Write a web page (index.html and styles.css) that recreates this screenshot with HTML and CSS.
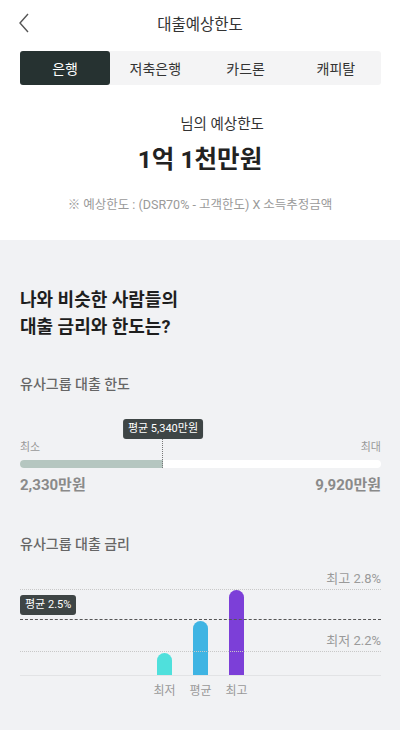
FILE: index.html
```html
<!DOCTYPE html>
<html lang="ko">
<head>
    <meta charset="UTF-8">
    <meta name="viewport" content="width=device-width, initial-scale=1.0">
    <title>대출예상한도</title>
    <link rel="stylesheet" href="styles.css">
</head>
<body>
    <div class="top">
        <header class="topbar">
            <button class="back" type="button" aria-label="뒤로">
                <svg width="12" height="20" viewBox="0 0 12 20"><polyline points="10,1 2,10 10,19" fill="none" stroke="#555" stroke-width="1.4"/></svg>
            </button>
            <h1>대출예상한도</h1>
        </header>

        <nav class="tabs">
            <a class="tab active">은행</a>
            <a class="tab">저축은행</a>
            <a class="tab">카드론</a>
            <a class="tab">캐피탈</a>
        </nav>

        <section class="summary">
            <p class="greet"><span class="name"></span>님의 예상한도</p>
            <p class="amount">1억 1천만원</p>
            <p class="note">※ 예상한도 : (DSR70% - 고객한도) X 소득추정금액</p>
        </section>
    </div>

    <section class="compare">
        <h2>나와 비슷한 사람들의<br>대출 금리와 한도는?</h2>

        <div class="block">
            <h3>유사그룹 대출 한도</h3>
            <div class="range">
                <div class="range-labels"><span>최소</span><span>최대</span></div>
                <div class="track">
                    <div class="fill" style="width: 39.6%">
                        <span class="tip">평균 5,340만원</span>
                    </div>
                </div>
                <div class="range-values"><span>2,330만원</span><span>9,920만원</span></div>
            </div>
        </div>

        <div class="block rate">
            <h3>유사그룹 대출 금리</h3>
            <div class="chart">
                <div class="line" style="bottom: 85px"><span class="line-label">최고 2.8%</span></div>
                <div class="line avg" style="bottom: 55px"><span class="avg-tag">평균 2.5%</span></div>
                <div class="line" style="bottom: 23px"><span class="line-label">최저 2.2%</span></div>
                <div class="bars">
                    <div class="col"><div class="bar low" style="height: 22px"></div></div>
                    <div class="col"><div class="bar mid" style="height: 54px"></div></div>
                    <div class="col"><div class="bar high" style="height: 85px"></div></div>
                </div>
            </div>
            <div class="bar-names">
                <span>최저</span><span>평균</span><span>최고</span>
            </div>
        </div>
    </section>
</body>
</html>
```

FILE: styles.css
```css
body {
    margin: 0;
    padding: 0;
    font-family: Roboto, "Noto Sans CJK KR", sans-serif;
    background-color: #f1f2f4;
    color: #222;
}

p, h1, h2, h3 {
    margin: 0;
}

.top {
    background-color: #fff;
}

.topbar {
    position: relative;
    height: 46px;
    display: flex;
    align-items: center;
    justify-content: center;
}

.topbar h1 {
    font-size: 15.5px;
    font-weight: 400;
    color: #333;
}

.back {
    position: absolute;
    left: 16px;
    top: 13px;
    border: none;
    background: none;
    padding: 0;
    width: 16px;
    height: 20px;
}

.tabs {
    display: flex;
    margin: 5px 19px 0 20px;
    height: 34px;
    background-color: #f4f4f5;
    border-radius: 3px;
}

.tab {
    flex: 1;
    display: flex;
    align-items: center;
    justify-content: center;
    font-size: 14px;
    color: #333;
}

.tab.active {
    background-color: #263231;
    color: #fff;
    border-radius: 3px;
}

.summary {
    text-align: center;
    padding: 30px 0 26px;
}

.greet {
    font-size: 14.5px;
    line-height: 20px;
    color: #333;
    padding-left: 44px;
}

.amount {
    margin-top: 9px;
    font-size: 24.5px;
    line-height: 32px;
    font-weight: 700;
    color: #222;
}

.note {
    margin-top: 20px;
    font-size: 12.5px;
    line-height: 18px;
    color: #9a9a9a;
}

.compare {
    padding: 46px 19px 40px 20px;
}

.compare h2 {
    font-size: 18px;
    line-height: 27px;
    font-weight: 700;
    color: #1e1e1e;
}

.block {
    margin-top: 34px;
}

.block h3 {
    font-size: 14px;
    line-height: 20px;
    font-weight: 500;
    color: #666;
}

.range {
    margin-top: 46px;
}

.range-labels,
.range-values {
    display: flex;
    justify-content: space-between;
}

.range-labels {
    font-size: 11px;
    line-height: 16px;
    color: #999;
}

.track {
    margin-top: 4px;
    height: 8px;
    background-color: #fff;
    border-radius: 4px;
}

.fill {
    position: relative;
    height: 100%;
    background-color: #b5c6c0;
    border-radius: 4px 0 0 4px;
}

.fill::after {
    content: "";
    position: absolute;
    right: 0;
    bottom: 0;
    height: 29px;
    border-left: 1px dotted #777;
}

.tip {
    position: absolute;
    right: 0;
    bottom: 29px;
    transform: translateX(50%);
    white-space: nowrap;
    background-color: #3e4545;
    color: #fff;
    font-size: 11px;
    line-height: 20px;
    padding: 0 5px;
    border-radius: 3px;
}

.range-values {
    margin-top: 7px;
    font-size: 15px;
    line-height: 20px;
    font-weight: 700;
    color: #8a8a8a;
}

.rate {
    margin-top: 39px;
}

.chart {
    position: relative;
    margin-top: 16px;
    height: 105px;
    border-bottom: 1px solid #e2e3e5;
}

.line {
    position: absolute;
    left: 0;
    right: 0;
    border-top: 1px dotted #c8c8c8;
}

.line.avg {
    border-top: 1px dashed #555;
}

.line-label {
    position: absolute;
    right: 0;
    bottom: 2px;
    font-size: 13px;
    line-height: 18px;
    color: #9a9a9a;
}

.avg-tag {
    position: absolute;
    left: 0;
    bottom: 5px;
    background-color: #3e4545;
    color: #fff;
    font-size: 11px;
    line-height: 20px;
    padding: 0 5px;
    border-radius: 3px;
}

.bars,
.bar-names {
    display: flex;
    justify-content: center;
    gap: 6px;
}

.bars {
    height: 100%;
    align-items: flex-end;
}

.col {
    width: 30px;
    display: flex;
    justify-content: center;
}

.bar {
    width: 15px;
    border-radius: 8px 8px 0 0;
}

.bar.low {
    background-color: #4fe0dc;
}

.bar.mid {
    background-color: #3fb4e3;
}

.bar.high {
    background-color: #7c3fd8;
}

.bar-names {
    margin-top: 6px;
}

.bar-names span {
    width: 30px;
    text-align: center;
    font-size: 12px;
    line-height: 18px;
    color: #999;
}
```
